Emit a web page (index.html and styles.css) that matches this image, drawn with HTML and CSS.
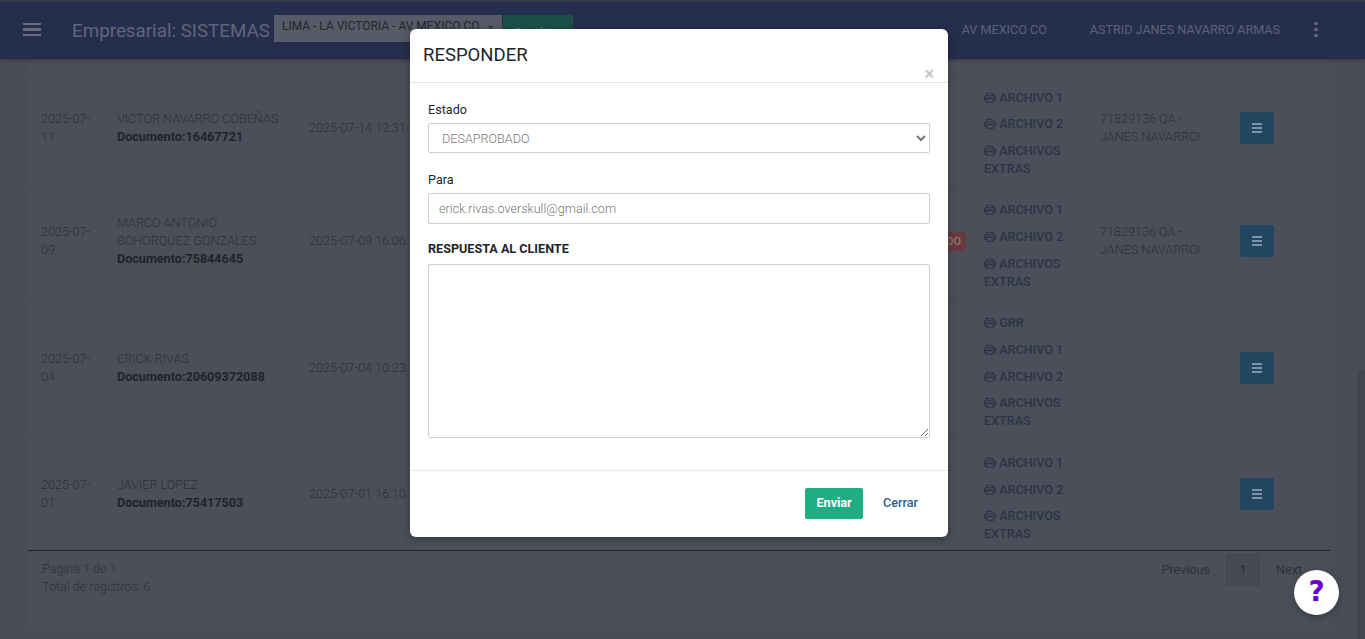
FILE: index.html
```html
<!DOCTYPE html>
<html lang="es">
<head>
<meta charset="utf-8">
<title>Responder</title>
<link rel="stylesheet" href="styles.css">
</head>
<body>
<svg class="defs" width="0" height="0" aria-hidden="true"><defs>
<symbol id="print" viewBox="0 0 14 12"><path d="M3 4V1h6.2L11 2.6V4M3 9.5H1.2a.7.7 0 0 1-.7-.7V5.2c0-.7.5-1.2 1.2-1.2h10.6c.7 0 1.2.5 1.2 1.2v3.6a.7.7 0 0 1-.7.7H11M3 7.5h8v4H3z" fill="none" stroke="currentColor" stroke-width="1.3"/><path d="M.5 6h13v1.5h-13z" fill="currentColor"/></symbol>
</defs></svg>

<header class="navbar">
  <span class="burger"><i></i><i></i><i></i></span>
  <span class="brand">Empresarial: SISTEMAS</span>
  <span class="branch">LIMA - LA VICTORIA - AV MEXICO CO<b class="caret"></b></span>
  <span class="change">Cambiar</span>
  <span class="nav-right">
    <span class="nav-branch">AV MEXICO CO</span>
    <span class="nav-user">ASTRID JANES NAVARRO ARMAS</span>
    <span class="dots"><i></i><i></i><i></i></span>
  </span>
</header>

<main class="main">
  <section class="card">
    <table class="grid">
      <colgroup><col class="c1"><col class="c2"><col class="c3"><col class="c4"><col class="c5"><col class="c6"><col class="c7"></colgroup>
      <tbody>
        <tr class="peek">
          <td></td><td></td><td></td><td></td>
          <td class="files-tail">EXTRAS</td>
          <td></td><td></td>
        </tr>
        <tr>
          <td>2025-07-11</td>
          <td>VICTOR NAVARRO COBEÑAS<br><strong>Documento:16467721</strong></td>
          <td>2025-07-14 12:31:52</td><td></td>
          <td class="files"><a><svg class="pi"><use href="#print"/></svg> ARCHIVO 1</a><a><svg class="pi"><use href="#print"/></svg> ARCHIVO 2</a><a><svg class="pi"><use href="#print"/></svg> ARCHIVOS EXTRAS</a></td>
          <td class="who">71829136 QA - JANES NAVARRO!</td>
          <td><span class="menu-btn"><i></i><i></i><i></i></span></td>
        </tr>
        <tr>
          <td>2025-07-09</td>
          <td>MARCO ANTONIO BOHORQUEZ GONZALES<br><strong>Documento:75844645</strong></td>
          <td>2025-07-09 16:06:10</td>
          <td class="state"><span class="badge">DESAPROBADO</span></td>
          <td class="files"><a><svg class="pi"><use href="#print"/></svg> ARCHIVO 1</a><a><svg class="pi"><use href="#print"/></svg> ARCHIVO 2</a><a><svg class="pi"><use href="#print"/></svg> ARCHIVOS EXTRAS</a></td>
          <td class="who">71829136 QA - JANES NAVARRO!</td>
          <td><span class="menu-btn"><i></i><i></i><i></i></span></td>
        </tr>
        <tr>
          <td>2025-07-04</td>
          <td>ERICK RIVAS<br><strong>Documento:20609372088</strong></td>
          <td>2025-07-04 10:23:31</td><td></td>
          <td class="files"><a><svg class="pi"><use href="#print"/></svg> GRR</a><a><svg class="pi"><use href="#print"/></svg> ARCHIVO 1</a><a><svg class="pi"><use href="#print"/></svg> ARCHIVO 2</a><a><svg class="pi"><use href="#print"/></svg> ARCHIVOS EXTRAS</a></td>
          <td></td><td><span class="menu-btn"><i></i><i></i><i></i></span></td>
        </tr>
        <tr>
          <td>2025-07-01</td>
          <td>JAVIER LOPEZ<br><strong>Documento:75417503</strong></td>
          <td>2025-07-01 16:10:15</td><td></td>
          <td class="files"><a><svg class="pi"><use href="#print"/></svg> ARCHIVO 1</a><a><svg class="pi"><use href="#print"/></svg> ARCHIVO 2</a><a><svg class="pi"><use href="#print"/></svg> ARCHIVOS EXTRAS</a></td>
          <td></td><td><span class="menu-btn"><i></i><i></i><i></i></span></td>
        </tr>
      </tbody>
    </table>
    <footer class="pager">
      <div class="totals">Pagina 1 de 1<br>Total de registros: 6</div>
      <div class="pages"><span>Previous</span><span class="current">1</span><span>Next</span></div>
    </footer>
  </section>
</main>

<div class="scroll-thumb"></div>

<section class="modal">
  <div class="modal-head">
    <h2>RESPONDER</h2>
    <span class="close">×</span>
  </div>
  <form class="modal-body">
    <label class="lbl">Estado</label>
    <select class="field sel"><option>DESAPROBADO</option></select>
    <label class="lbl">Para</label>
    <input class="field inp" type="text" value="erick.rivas.overskull@gmail.com">
    <label class="lbl strong">RESPUESTA AL CLIENTE</label>
    <textarea class="field area"></textarea>
  </form>
  <div class="modal-foot">
    <span class="btn-send">Enviar</span>
    <span class="btn-close">Cerrar</span>
  </div>
</section>

<span class="help">?</span>
</body>
</html>
```

FILE: styles.css
```css
* { box-sizing: border-box; }
html, body { margin: 0; height: 639px; overflow: hidden; }
body { background: #4a4d57; font-family: Roboto, "Liberation Sans", sans-serif; font-size: 12.6px; line-height: 18px; color: #2c2f38; font-weight: 300; position: relative; }
.defs { position: absolute; }

.navbar { position: absolute; top: 0; left: 0; right: 0; height: 59px; z-index: 2; background: #262e4e; border-top: 2px solid #363a48; box-shadow: 0 1px 4px rgba(0,0,0,.3); display: flex; align-items: center; padding: 0 0 0 23px; color: #5c6276; }
.burger { display: flex; flex-direction: column; gap: 3px; width: 18px; margin-top: -2px; }
.burger i { display: block; height: 2.5px; background: #666c7e; }
.brand { font-size: 18.8px; font-weight: 400; margin-left: 31px; color: #5f6679; white-space: nowrap; }
.branch { position: relative; width: 228px; height: 27px; margin: -5px 0 0 4px; background: #565b67; color: #24262e; font-size: 12px; font-weight: 400; padding: 2px 0 0 8px; white-space: nowrap; }
.caret { position: absolute; right: 8px; top: 11px; border: 3px solid transparent; border-top: 4px solid #363944; }
.change { width: 70px; height: 27px; margin: -5px 0 0 1px; background: #1b4f48; color: #3a7a6e; text-align: center; padding-top: 9px; font-weight: 500; border-radius: 2px; }
.nav-right { margin-left: auto; display: flex; align-items: center; font-size: 12.6px; font-weight: 400; color: #5c6276; margin-top: -2px; }
.nav-user { margin-left: 43px; }
.dots { display: flex; flex-direction: column; gap: 2.5px; margin: 0 47px 0 34px; }
.dots i { width: 4px; height: 3.5px; border-radius: 50%; background: #666c7e; }

.main { margin-top: 46px; padding: 0 35px 0 28px; }
.card { background: #4c4f59; }
.grid { width: 100%; border-collapse: collapse; table-layout: fixed; border-bottom: 1px solid #20232b; }
.c1 { width: 76px; } .c2 { width: 192px; } .c3 { width: 180px; } .c4 { width: 495px; }
.c5 { width: 116px; } .c6 { width: 140px; } .c7 { width: 103px; }
.grid tr { border-bottom: 1px solid #464a54; }
.grid tr:last-child { border-bottom: 0; }
.grid td { padding: 0 10px 0 13px; vertical-align: middle; overflow: hidden; }
.grid strong { font-weight: 700; color: #20232a; }
.grid .peek td { height: 26px; padding-top: 0; vertical-align: top; }
.grid td.files-tail { color: #29344a; font-weight: 500; }
.grid td.files { padding-top: 16px; padding-bottom: 0; vertical-align: top; }
.files a { display: block; margin-bottom: 8.6px; color: #29344a; font-weight: 500; }
.files a:last-child { margin-bottom: 6.8px; }
.pi { display: inline-block; width: 12px; height: 11px; vertical-align: -1px; color: #29344a; }
.grid td.state { text-align: right; padding-right: 5px; }
.badge { display: inline-block; height: 19px; padding: 0 5px; background: #663a40; color: #94797b; border-radius: 2px; font-size: 11px; line-height: 19px; font-weight: 500; white-space: nowrap; }
.menu-btn { display: flex; flex-direction: column; gap: 2px; align-items: center; justify-content: center; width: 34px; height: 32px; background: #224560; border-radius: 2px; }
.menu-btn i { width: 10px; height: 2px; background: #7f93a6; }

.pager { display: flex; justify-content: space-between; padding: 9px 28px 34px 14px; }
.pages { display: flex; align-items: center; height: 32px; margin-top: -6px; color: #2c2f39; font-weight: 400; }
.pages span { padding: 0 16px 0 0; }
.pages span:last-child { padding: 0; }
.pages .current { width: 34px; height: 32px; line-height: 30px; padding: 0; margin-right: 16px; text-align: center; background: #474a54; border: 1px solid #434650; border-radius: 2px; }
.scroll-thumb { position: absolute; right: 0; top: 370px; bottom: 0; width: 8px; background: #434650; }

.modal { position: absolute; z-index: 3; left: 410px; top: 29px; width: 538px; height: 508px; background: #fff; border-radius: 6px; box-shadow: 0 2px 8px rgba(0,0,0,.35); display: flex; flex-direction: column; color: #212529; }
.modal-head { position: relative; height: 54px; border-bottom: 1px solid #e3e3e3; padding: 15px 13px 0; }
.modal-head h2 { margin: 0; font-size: 18.5px; line-height: 22px; font-weight: 400; }
.close { position: absolute; right: 14px; top: 36px; color: #c9c9c9; font-size: 18px; font-weight: 700; line-height: 18px; }
.modal-body { flex: 1; display: flex; flex-direction: column; padding: 18px 18px 0; }
.lbl { font-size: 12.6px; font-weight: 400; line-height: 18px; height: 18px; margin-bottom: 4px; }
.lbl.strong { font-weight: 700; margin-bottom: 6px; }
.field { display: block; width: 502px; border: 1px solid #cfcfcf; border-radius: 2px; background: #fff; font-family: Roboto, "Liberation Sans", sans-serif; color: #777; font-weight: 300; font-size: 12.6px; outline: 0; }
.sel { height: 30px; margin-bottom: 18px; padding-left: 9px; font-weight: 300; }
.inp { height: 31px; margin-bottom: 16px; padding: 0 10px; }
.area { height: 174px; }
.modal-foot { height: 67px; border-top: 1px solid #e9e9e9; display: flex; align-items: center; justify-content: flex-end; padding: 0 30px 2px 0; }
.btn-send { width: 58px; height: 31px; background: #1fad83; color: #fff; font-weight: 700; text-align: center; line-height: 30px; border-radius: 2px; margin-right: 20px; }
.btn-close { color: #2e5f8f; font-weight: 500; }

.help { position: absolute; z-index: 4; left: 1294px; top: 570px; width: 45px; height: 45px; border-radius: 50%; background: #fff; color: #6a00d6; text-align: center; font-family: "DejaVu Sans", sans-serif; font-size: 28px; font-weight: 700; line-height: 43px; box-shadow: 0 2px 6px rgba(0,0,0,.3); }
```
